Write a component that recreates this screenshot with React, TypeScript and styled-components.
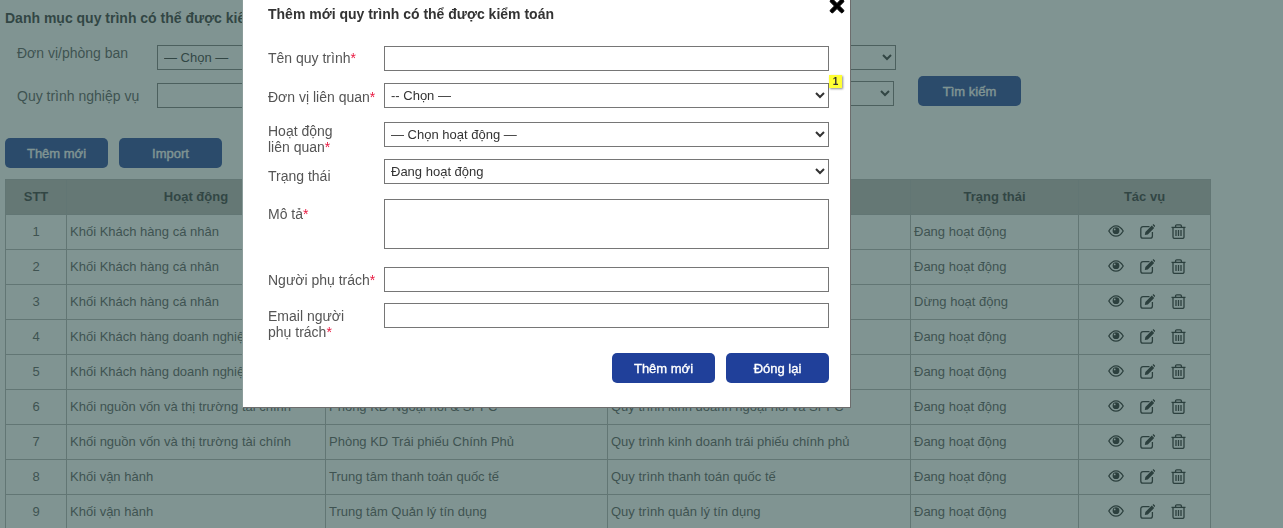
import styled, { createGlobalStyle } from "styled-components";
import { FaTimes } from "react-icons/fa";

const GlobalStyle = createGlobalStyle`
  html, body {
    margin: 0;
    height: 100%;
    overflow: hidden;
    background: #fff;
    font-family: "Liberation Sans", Arial, sans-serif;
    font-size: 14px;
    color: #555;
  }
`;

const Page = styled.div`
  padding: 0 72px 0 5px;
`;

const PageTitle = styled.h2`
  margin: 0 0 9px;
  font-size: 14px;
  line-height: 36px;
  font-weight: 700;
  color: #333;
`;

const FilterRow = styled.div<{ $height: number; $gap?: number }>`
  display: flex;
  align-items: flex-start;
  height: ${(p) => p.$height}px;
  margin-top: ${(p) => p.$gap ?? 0}px;
  padding-left: 12px;
`;

const FilterLabel = styled.label<{ $top: number; $width: number }>`
  width: ${(p) => p.$width}px;
  padding-top: ${(p) => p.$top}px;
  line-height: 16px;
  flex: none;
`;

const Select = styled.select`
  box-sizing: border-box;
  height: 25px;
  width: 100%;
  padding: 0 2px;
  border: 1px solid #767676;
  border-radius: 0;
  background: #fff;
  color: #333;
  font-family: "Liberation Sans", Arial, sans-serif;
  font-size: 13px;
`;

const FilterSelect = styled(Select)<{ $top: number; $width: number }>`
  flex: none;
  width: ${(p) => p.$width}px;
  margin-top: ${(p) => p.$top}px;
`;

const FilterInput = styled.input<{ $top: number; $width: number }>`
  flex: none;
  box-sizing: border-box;
  height: 25px;
  width: ${(p) => p.$width}px;
  margin-top: ${(p) => p.$top}px;
  border: 1px solid #767676;
`;

const Button = styled.button`
  flex: none;
  width: 103px;
  height: 30px;
  padding: 0;
  border: none;
  border-radius: 5px;
  background: #20409a;
  color: #fff;
  font-family: "Liberation Sans", Arial, sans-serif;
  font-size: 13px;
  -webkit-text-stroke: 0.35px #fff;
`;

const SearchButton = styled(Button)`
  margin-left: 24px;
`;

const ActionRow = styled.div`
  display: flex;
  gap: 11px;
  margin: 30px 0 11px;
`;

const Table = styled.table`
  width: 1205px;
  table-layout: fixed;
  border-collapse: collapse;
`;

const HeadCell = styled.th`
  height: 35px;
  box-sizing: border-box;
  padding: 0 3px 2px;
  border: 1px solid #b0b0b0;
  background: #b7b5b3;
  color: #333;
  font-size: 13px;
  font-weight: 700;
  text-align: center;
`;

const Cell = styled.td<{ $center?: boolean }>`
  height: 35px;
  box-sizing: border-box;
  padding: 0 3px 1px;
  border: 1px solid #b0b0b0;
  font-size: 13px;
  text-align: ${(p) => (p.$center ? "center" : "left")};
  white-space: nowrap;
  overflow: hidden;
  line-height: 16px;
`;

const Actions = styled.div`
  display: flex;
  justify-content: center;
  align-items: center;
  gap: 16px;
  padding: 0 0 1px 4px;
  color: #222;
`;

const Overlay = styled.div`
  position: fixed;
  inset: 0;
  background: rgba(50, 82, 79, 0.62);
`;

const Modal = styled.div`
  position: fixed;
  top: 0;
  left: 243px;
  box-sizing: border-box;
  width: 608px;
  height: 408px;
  padding: 0 21px 0 25px;
  background: #fff;
  border-right: 1px solid #6d6d6d;
  border-bottom: 1px solid #6d6d6d;
  box-shadow: -1px 0 0 #8a9c9a;
`;

const CloseIcon = styled(FaTimes)`
  position: absolute;
  top: -4px;
  left: 584px;
  font-size: 20px;
  color: #000;
  stroke: #000;
  stroke-width: 24;
`;

const ModalTitle = styled.h3`
  margin: 0 0 18px;
  font-size: 14px;
  line-height: 28px;
  font-weight: 700;
  color: #333;
`;

const FormRow = styled.div<{ $height: number; $gap?: number }>`
  position: relative;
  display: grid;
  grid-template-columns: 116px 445px;
  align-items: start;
  height: ${(p) => p.$height}px;
  margin-top: ${(p) => p.$gap ?? 0}px;
`;

const FormLabel = styled.label<{ $top: number }>`
  padding-top: ${(p) => p.$top}px;
  line-height: 16px;
  color: #555;
`;

const Required = styled.span`
  color: #e8173f;
`;

const TextInput = styled.input`
  box-sizing: border-box;
  width: 100%;
  height: 25px;
  border: 1px solid #767676;
`;

const TextArea = styled.textarea`
  display: block;
  box-sizing: border-box;
  width: 100%;
  height: 50px;
  border: 1px solid #767676;
  resize: none;
`;

const Badge = styled.span`
  position: absolute;
  top: -8px;
  right: -13px;
  width: 13px;
  height: 13px;
  background: #ffff33;
  box-shadow: 1px 1px 2px rgba(0, 0, 0, 0.45);
  color: #333;
  font-size: 10px;
  font-weight: 700;
  line-height: 13px;
  text-align: center;
`;

const ModalFooter = styled.div`
  display: flex;
  justify-content: flex-end;
  gap: 11px;
  margin-top: 25px;
`;

const EyeIcon = () => (
  <svg width="16" height="12" viewBox="0 0 16 12">
    <path
      d="M.8 6C3 2.3 5.4.8 8 .8s5 1.5 7.2 5.2c-2.2 3.7-4.6 5.2-7.2 5.2S3 9.7.8 6z"
      fill="none"
      stroke="currentColor"
      strokeWidth="1.3"
    />
    <circle cx="8" cy="5.7" r="3.4" fill="currentColor" />
    <circle cx="6.7" cy="4.4" r="0.9" fill="#fff" />
  </svg>
);

const EditIcon = () => (
  <svg width="15" height="15" viewBox="0 0 15 15">
    <path
      d="M9.5 2.6H3A2.2 2.2 0 0 0 .8 4.8V12A2.2 2.2 0 0 0 3 14.2h7.2a2.2 2.2 0 0 0 2.2-2.2V8"
      fill="none"
      stroke="currentColor"
      strokeWidth="1.3"
    />
    <path d="M4.8 11l.6-3 6.4-6.4 2.4 2.4-6.4 6.4z" fill="currentColor" />
    <path d="M12.5.9l.9-.9L15 1.6v.9l-.6.6z" fill="currentColor" />
  </svg>
);

const TrashIcon = () => (
  <svg width="15" height="15" viewBox="0 0 15 15" fill="none" stroke="currentColor" strokeWidth="1.3">
    <path d="M.5 3.4h14" />
    <path d="M4.6 3.4V1.9a1.1 1.1 0 0 1 1.1-1.1h3.6a1.1 1.1 0 0 1 1.1 1.1v1.5" />
    <path d="M2 3.4v9.6a1.4 1.4 0 0 0 1.4 1.4h8.2A1.4 1.4 0 0 0 13 13V3.4" />
    <path d="M5 6v6M7.5 6v6M10 6v6" />
  </svg>
);

const columns = [61, 259, 282, 303, 168, 132];

const heads = ["STT", "Hoạt động", "Đơn vị", "Quy trình", "Trạng thái", "Tác vụ"];

const rows = [
  ["Khối Khách hàng cá nhân", "", "", "Đang hoạt động"],
  ["Khối Khách hàng cá nhân", "", "", "Đang hoạt động"],
  ["Khối Khách hàng cá nhân", "", "", "Dừng hoạt động"],
  ["Khối Khách hàng doanh nghiệp", "", "", "Đang hoạt động"],
  ["Khối Khách hàng doanh nghiệp", "", "", "Đang hoạt động"],
  [
    "Khối nguồn vốn và thị trường tài chính",
    "Phòng KD Ngoại hối & SPFC",
    "Quy trình kinh doanh ngoại hối và SPFC",
    "Đang hoạt động",
  ],
  [
    "Khối nguồn vốn và thị trường tài chính",
    "Phòng KD Trái phiếu Chính Phủ",
    "Quy trình kinh doanh trái phiếu chính phủ",
    "Đang hoạt động",
  ],
  ["Khối vận hành", "Trung tâm thanh toán quốc tế", "Quy trình thanh toán quốc tế", "Đang hoạt động"],
  ["Khối vận hành", "Trung tâm Quản lý tín dụng", "Quy trình quản lý tín dụng", "Đang hoạt động"],
];

function App() {
  return (
    <>
      <GlobalStyle />
      <Page>
        <PageTitle>Danh mục quy trình có thể được kiểm toán</PageTitle>
        <FilterRow $height={25}>
          <FilterLabel $top={0} $width={140}>
            Đơn vị/phòng ban
          </FilterLabel>
          <FilterSelect $top={0} $width={320}>
            <option>— Chọn —</option>
          </FilterSelect>
          <FilterLabel $top={4} $width={99}>
            Trạng thái
          </FilterLabel>
          <FilterSelect $top={0} $width={320}>
            <option></option>
          </FilterSelect>
        </FilterRow>
        <FilterRow $height={32} $gap={6}>
          <FilterLabel $top={12} $width={140}>
            Quy trình nghiệp vụ
          </FilterLabel>
          <FilterInput $top={7} $width={320} />
          <FilterLabel $top={12} $width={99}>
            Đơn vị
          </FilterLabel>
          <FilterSelect $top={5} $width={318}>
            <option></option>
          </FilterSelect>
          <SearchButton>Tìm kiếm</SearchButton>
        </FilterRow>
        <ActionRow>
          <Button>Thêm mới</Button>
          <Button>Import</Button>
        </ActionRow>
        <Table>
          <colgroup>
            {columns.map((w, i) => (
              <col key={i} width={w} />
            ))}
          </colgroup>
          <thead>
            <tr>
              {heads.map((h) => (
                <HeadCell key={h}>{h}</HeadCell>
              ))}
            </tr>
          </thead>
          <tbody>
            {rows.map((r, i) => (
              <tr key={i}>
                <Cell $center>{i + 1}</Cell>
                {r.map((text, j) => (
                  <Cell key={j}>{text}</Cell>
                ))}
                <Cell>
                  <Actions>
                    <EyeIcon />
                    <EditIcon />
                    <TrashIcon />
                  </Actions>
                </Cell>
              </tr>
            ))}
          </tbody>
        </Table>
      </Page>
      <Overlay />
      <Modal>
        <CloseIcon />
        <ModalTitle>Thêm mới quy trình có thể được kiểm toán</ModalTitle>
        <FormRow $height={25}>
          <FormLabel $top={4}>
            Tên quy trình<Required>*</Required>
          </FormLabel>
          <TextInput />
        </FormRow>
        <FormRow $height={25} $gap={12}>
          <FormLabel $top={6}>
            Đơn vị liên quan<Required>*</Required>
          </FormLabel>
          <Select>
            <option>-- Chọn —</option>
          </Select>
          <Badge>1</Badge>
        </FormRow>
        <FormRow $height={25} $gap={14}>
          <FormLabel $top={1}>
            Hoạt động
            <br />
            liên quan<Required>*</Required>
          </FormLabel>
          <Select>
            <option>— Chọn hoạt động —</option>
          </Select>
        </FormRow>
        <FormRow $height={25} $gap={12}>
          <FormLabel $top={9}>Trạng thái</FormLabel>
          <Select>
            <option>Đang hoạt động</option>
          </Select>
        </FormRow>
        <FormRow $height={50} $gap={15}>
          <FormLabel $top={7}>
            Mô tả<Required>*</Required>
          </FormLabel>
          <TextArea />
        </FormRow>
        <FormRow $height={25} $gap={18}>
          <FormLabel $top={5}>
            Người phụ trách<Required>*</Required>
          </FormLabel>
          <TextInput />
        </FormRow>
        <FormRow $height={25} $gap={11}>
          <FormLabel $top={5}>
            Email người
            <br />
            phụ trách<Required>*</Required>
          </FormLabel>
          <TextInput />
        </FormRow>
        <ModalFooter>
          <Button>Thêm mới</Button>
          <Button>Đóng lại</Button>
        </ModalFooter>
      </Modal>
    </>
  );
}

export default App;
